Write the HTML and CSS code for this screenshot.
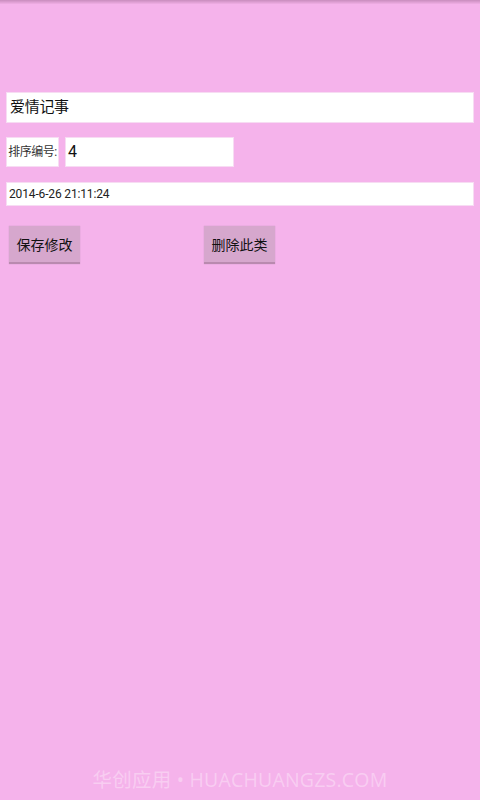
FILE: index.html
```html
<!DOCTYPE html>
<html lang="zh">
<head>
<meta charset="utf-8">
<link rel="stylesheet" href="styles.css">
</head>
<body>
<div class="screen">
  <div class="topshade"></div>
  <div class="form">
    <div class="field title">爱情记事</div>
    <div class="row">
      <div class="label">排序编号:</div>
      <div class="field num">4</div>
    </div>
    <div class="field date">2014-6-26 21:11:24</div>
    <div class="buttons">
      <div class="btn">保存修改</div>
      <div class="btn">删除此类</div>
    </div>
  </div>
  <div class="watermark">华创应用 • HUACHUANGZS.COM</div>
</div>
</body>
</html>
```
FILE: styles.css
```css
html, body {
  margin: 0;
  padding: 0;
}
body {
  background: #f5b3eb;
  font-family: Roboto, "Noto Sans CJK SC", sans-serif;
}
.screen {
  position: relative;
  width: 480px;
  height: 800px;
  overflow: hidden;
  background: #f5b3eb;
}
.topshade {
  height: 4px;
  background: linear-gradient(#c88cbd, #f0aee5);
}
.form {
  padding: 88px 6px 0 6px;
  display: flex;
  flex-direction: column;
}
.field {
  background: #ffffff;
  box-shadow: inset 0 0 0 1px #f7dcf3;
  color: #111;
  box-sizing: border-box;
}
.title {
  height: 31px;
  font-size: 15px;
  line-height: 31px;
  padding-left: 4px;
  letter-spacing: -0.3px;
}
.row {
  display: flex;
  margin-top: 14px;
  gap: 6px;
  height: 30px;
}
.label {
  width: 53px;
  background: #fff;
  box-shadow: inset 0 0 0 1px #f7dcf3;
  font-size: 12px;
  line-height: 30px;
  color: #333;
  text-align: center;
  letter-spacing: -0.5px;
  white-space: nowrap;
}
.num {
  width: 169px;
  font-size: 16px;
  line-height: 30px;
  padding-left: 3px;
}
.date {
  margin-top: 15px;
  height: 24px;
  font-size: 12px;
  line-height: 24px;
  padding-left: 3px;
  color: #222;
  letter-spacing: -0.15px;
}
.buttons {
  display: flex;
  gap: 124px;
  margin-top: 20px;
  padding-left: 3px;
}
.btn {
  width: 71px;
  height: 38px;
  box-sizing: border-box;
  background: #d6a7cd;
  border-bottom: 2px solid #b98aaf;
  box-shadow: 0 0 1px #c597bb;
  font-size: 14px;
  line-height: 38px;
  text-align: center;
  color: #111;
}
.watermark {
  position: absolute;
  left: 0;
  right: 0;
  top: 764px;
  text-align: center;
  font-family: "Open Sans", "Noto Sans CJK SC", sans-serif;
  font-size: 19.5px;
  color: rgba(255, 255, 255, 0.35);
  letter-spacing: 0.2px;
}
```
